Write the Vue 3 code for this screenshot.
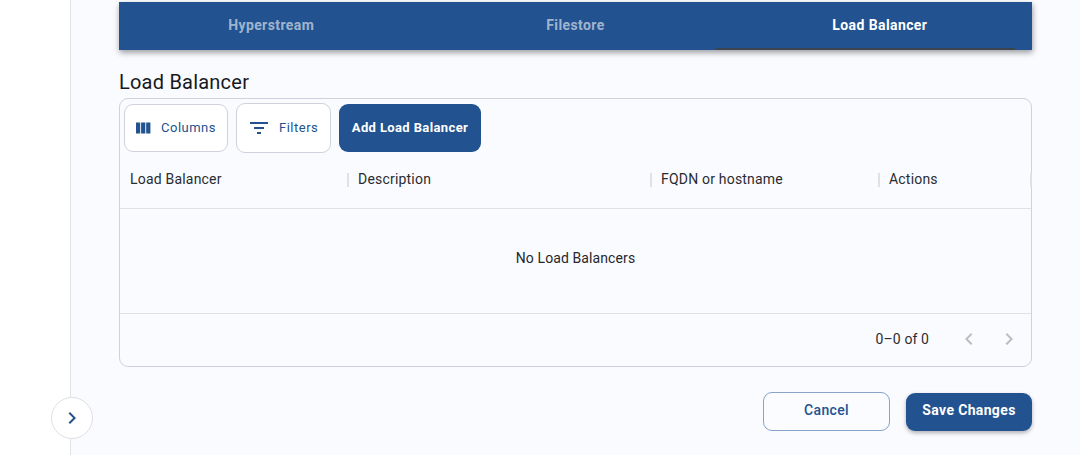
<script setup>
const tabs = [
  { label: 'Hyperstream', active: false },
  { label: 'Filestore', active: false },
  { label: 'Load Balancer', active: true },
]
const columns = [
  { label: 'Load Balancer', width: 228 },
  { label: 'Description', width: 303 },
  { label: 'FQDN or hostname', width: 228 },
  { label: 'Actions', width: 152 },
]
</script>

<template>
  <div class="page">
    <aside class="sidebar">
      <button class="toggle" aria-label="Expand">
        <svg width="24" height="24" viewBox="0 0 24 24"><path d="M10 6 8.59 7.41 13.17 12l-4.58 4.59L10 18l6-6z" fill="#22528f" /></svg>
      </button>
    </aside>
    <main class="main">
      <nav class="tabs">
        <div v-for="t in tabs" :key="t.label" class="tab" :class="{ active: t.active }">{{ t.label }}</div>
        <span class="indicator"></span>
      </nav>
      <h2 class="title">Load Balancer</h2>
      <section class="grid">
        <div class="toolbar">
          <button class="tool columns-btn">
            <svg width="18" height="18" viewBox="0 0 18 18"><path d="M1 3.500h4.200v11H1zM6.100 3.500h4.200v11H6.100zM11.200 3.500h4.200v11h-4.200z" fill="#22528f" /></svg>
            <span>Columns</span>
          </button>
          <button class="tool filters-btn">
            <svg width="24" height="24" viewBox="0 0 24 24"><path d="M3 6h18v2H3zM7 11h10v2H7zM10 16h4v2h-4z" fill="#22528f" /></svg>
            <span>Filters</span>
          </button>
          <button class="add"><span>Add Load Balancer</span></button>
        </div>
        <div class="head">
          <div v-for="c in columns" :key="c.label" class="cell" :style="{ width: c.width + 'px' }">
            <span>{{ c.label }}</span><i class="sep"></i>
          </div>
        </div>
        <div class="empty">No Load Balancers</div>
        <div class="foot">
          <span class="count">0–0 of 0</span>
          <svg class="nav first" width="24" height="24" viewBox="0 0 24 24"><path d="M15.410 7.410 14 6l-6 6 6 6 1.410-1.410L10.830 12z" fill="#bdbdbd" /></svg>
          <svg class="nav" width="24" height="24" viewBox="0 0 24 24"><path d="M10 6 8.590 7.410 13.170 12l-4.580 4.590L10 18l6-6z" fill="#bdbdbd" /></svg>
        </div>
      </section>
      <div class="actions">
        <button class="cancel"><span>Cancel</span></button>
        <button class="save"><span>Save Changes</span></button>
      </div>
    </main>
  </div>
</template>

<style>
html, body { margin: 0; background: #fafbff; overflow: hidden; }
</style>

<style scoped>
.page {
  display: flex;
  width: 1080px;
  height: 455px;
  overflow: hidden;
  font-family: Roboto, "Liberation Sans", sans-serif;
  color: #1f1f1f;
  background: #fafbff;
}
.sidebar {
  position: relative;
  flex: none;
  width: 70px;
  background: #fff;
  border-right: 1px solid #e2e3e6;
}
.toggle {
  position: absolute;
  left: 51px;
  top: 397px;
  width: 42px;
  height: 42px;
  padding: 0;
  display: flex;
  align-items: center;
  justify-content: center;
  background: #fff;
  border: 1px solid #dfe0e3;
  border-radius: 50%;
}
.main {
  flex: none;
  width: 913px;
  padding: 2px 0 0 48px;
}
button { font-family: inherit; cursor: pointer; box-sizing: border-box; }
button span { display: block; margin-bottom: 2px; }
.tabs {
  position: relative;
  display: grid;
  grid-template-columns: repeat(3, 1fr);
  height: 48px;
  background: #22528f;
  box-shadow: 0 3px 6px rgba(0, 0, 0, 0.28), 2px 2px 5px rgba(0, 0, 0, 0.12);
}
.tab {
  display: flex;
  align-items: center;
  justify-content: center;
  padding-bottom: 2px;
  font-size: 14px;
  font-weight: 700;
  letter-spacing: 0.4px;
  color: rgba(255, 255, 255, 0.58);
}
.tab.active { color: #fff; }
.indicator {
  position: absolute;
  left: 597px;
  bottom: 0;
  width: 299px;
  height: 2px;
  background: #3c4450;
}
.title {
  margin: 19px 0 0;
  font-size: 20px;
  line-height: 27px;
  font-weight: 450;
  letter-spacing: 0.22px;
  color: #17181b;
}
.grid {
  box-sizing: border-box;
  height: 269px;
  margin-top: 2px;
  background: #fafbff;
  border: 1px solid #cfd1dc;
  border-radius: 9px;
  display: flex;
  flex-direction: column;
}
.toolbar {
  display: flex;
  align-items: center;
  gap: 8px;
  height: 54px;
  padding: 4px 0 0 4px;
  box-sizing: border-box;
  flex: none;
}
.tool {
  display: flex;
  align-items: center;
  background: #fff;
  border: 1px solid #cfd1dc;
  border-radius: 9px;
  color: #22528f;
  font-size: 13px;
  font-weight: 450;
  letter-spacing: 0.5px;
}
.columns-btn { width: 104px; height: 48px; padding: 0 0 0 10px; gap: 8px; }
.filters-btn { width: 95px; height: 50px; padding: 0 0 0 10px; gap: 8px; }
.add {
  width: 142px;
  height: 48px;
  padding: 0;
  border: 0;
  border-radius: 9px;
  background: #22528f;
  color: #fff;
  font-size: 13px;
  font-weight: 700;
  letter-spacing: 0.38px;
}
.head {
  display: flex;
  height: 56px;
  flex: none;
  box-sizing: border-box;
  border-bottom: 1px solid #e0e1e6;
  padding: 0 0 4px;
}
.cell {
  position: relative;
  display: flex;
  align-items: center;
  box-sizing: border-box;
  padding-left: 10px;
  font-size: 14px;
  font-weight: 400;
  letter-spacing: 0.2px;
  color: #2a2b2f;
}
.sep {
  position: absolute;
  right: -1px;
  top: 20px;
  width: 2px;
  height: 14px;
  background: #e0e1e4;
}
.empty {
  flex: none;
  height: 105px;
  display: flex;
  align-items: center;
  justify-content: center;
  box-sizing: border-box;
  padding: 0 0 6px;
  font-size: 14px;
  letter-spacing: 0.1px;
  color: #26272b;
  border-bottom: 1px solid #e0e1e6;
}
.foot {
  flex: 1;
  display: flex;
  align-items: center;
  padding: 0 10px 2px 0;
}
.count {
  margin-left: auto;
  font-size: 14px;
  letter-spacing: 0.1px;
  color: #2a2b2f;
}
.nav { flex: none; }
.nav.first { margin: 0 16px 0 28px; }
.actions {
  display: flex;
  justify-content: flex-end;
  gap: 16px;
  margin-top: 25px;
}
.cancel, .save {
  height: 38px;
  border-radius: 9px;
  font-size: 14px;
  letter-spacing: 0.35px;
  padding: 0;
}
.cancel span, .save span { margin-bottom: 4px; }
.cancel {
  width: 127px;
  height: 39px;
  background: #fbfcff;
  border: 1px solid #86a3c7;
  color: #22528f;
  font-weight: 500;
}
.save {
  width: 126px;
  margin-top: 1px;
  border: 0;
  background: #22528f;
  color: #fff;
  font-weight: 700;
  box-shadow: 0 2px 4px rgba(0, 0, 0, 0.3);
}
</style>
